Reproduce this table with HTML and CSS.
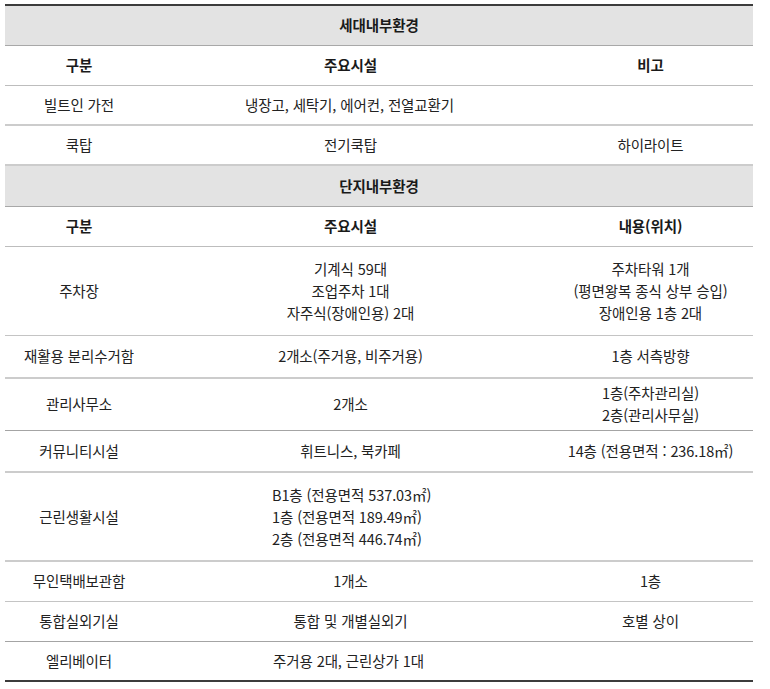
FILE: index.html
```html
<!DOCTYPE html>
<html lang="ko">
<head>
<meta charset="utf-8">
<link rel="stylesheet" href="styles.css">
</head>
<body>
<table class="spec">
  <colgroup>
    <col class="c1"><col class="c2"><col class="c3">
  </colgroup>
  <tbody>
    <tr class="sec h40 first"><th colspan="3">세대내부환경</th></tr>
    <tr class="colhead h40"><th>구분</th><th>주요시설</th><th>비고</th></tr>
    <tr class="h40 thick"><td>빌트인 가전</td><td class="left">냉장고, 세탁기, 에어컨, 전열교환기</td><td></td></tr>
    <tr class="h40 thick"><td>쿡탑</td><td>전기쿡탑</td><td>하이라이트</td></tr>
    <tr class="sec h41"><th colspan="3">단지내부환경</th></tr>
    <tr class="colhead h40"><th>구분</th><th>주요시설</th><th>내용(위치)</th></tr>
    <tr class="h89"><td>주차장</td><td>기계식 59대<br>조업주차 1대<br>자주식(장애인용) 2대</td><td>주차타워 1개<br>(평면왕복 종식 상부 승입)<br>장애인용 1층 2대</td></tr>
    <tr class="h43 thick"><td>재활용 분리수거함</td><td>2개소(주거용, 비주거용)</td><td>1층 서측방향</td></tr>
    <tr class="h52 dark"><td>관리사무소</td><td>2개소</td><td>1층(주차관리실)<br>2층(관리사무실)</td></tr>
    <tr class="h42 thick"><td>커뮤니티시설</td><td>휘트니스, 북카페</td><td>14층 (전용면적 : 236.18㎡)</td></tr>
    <tr class="h89 thick"><td>근린생활시설</td><td class="left2">B1층 (전용면적 537.03㎡)<br>1층 (전용면적 189.49㎡)<br>2층 (전용면적 446.74㎡)</td><td></td></tr>
    <tr class="h40"><td>무인택배보관함</td><td>1개소</td><td>1층</td></tr>
    <tr class="h40 dark"><td>통합실외기실</td><td>통합 및 개별실외기</td><td>호별 상이</td></tr>
    <tr class="h40 last"><td>엘리베이터</td><td class="left3">주거용 2대, 근린상가 1대</td><td></td></tr>
  </tbody>
</table>
</body>
</html>
```

FILE: styles.css
```css
html, body {
  margin: 0;
  padding: 0;
  background: #ffffff;
}
body {
  padding: 4px 0 0 5px;
  font-family: "Noto Sans CJK KR", "Noto Sans", sans-serif;
  font-size: 14.5px;
  color: #222222;
  letter-spacing: -0.1px;
}
.spec {
  border-collapse: collapse;
  width: 748px;
  table-layout: fixed;
}
.c1 { width: 148px; }
.c2 { width: 395px; }
.c3 { width: 205px; }
.spec th, .spec td {
  padding: 0;
  text-align: center;
  vertical-align: middle;
  line-height: 22px;
  border-bottom: 1px solid #c4c4c4;
}
.spec th {
  font-weight: 700;
  color: #1a1a1a;
}
.sec th {
  background: #e3e3e3;
  border-bottom: 1px solid #a8a8a8;
}
.first th {
  border-top: 2px solid #3c3c3c;
}
.colhead th {
  border-bottom: 1px solid #bdbdbd;
}
.thick td {
  border-bottom: 2px solid #cccccc;
}
.dark td {
  border-bottom: 1px solid #a4a4a4;
}
.last td {
  border-bottom: 2px solid #3c3c3c;
}
.h40 { height: 40px; }
.h41 { height: 41px; }
.h42 { height: 42px; }
.h43 { height: 43px; }
.h52 { height: 52px; }
.h89 { height: 89px; }
.spec td.left {
  text-align: left;
  padding-left: 92px;
}
.spec td.left2 {
  text-align: left;
  padding-left: 119px;
}
.spec td.left3 {
  text-align: left;
  padding-left: 120px;
}
```
